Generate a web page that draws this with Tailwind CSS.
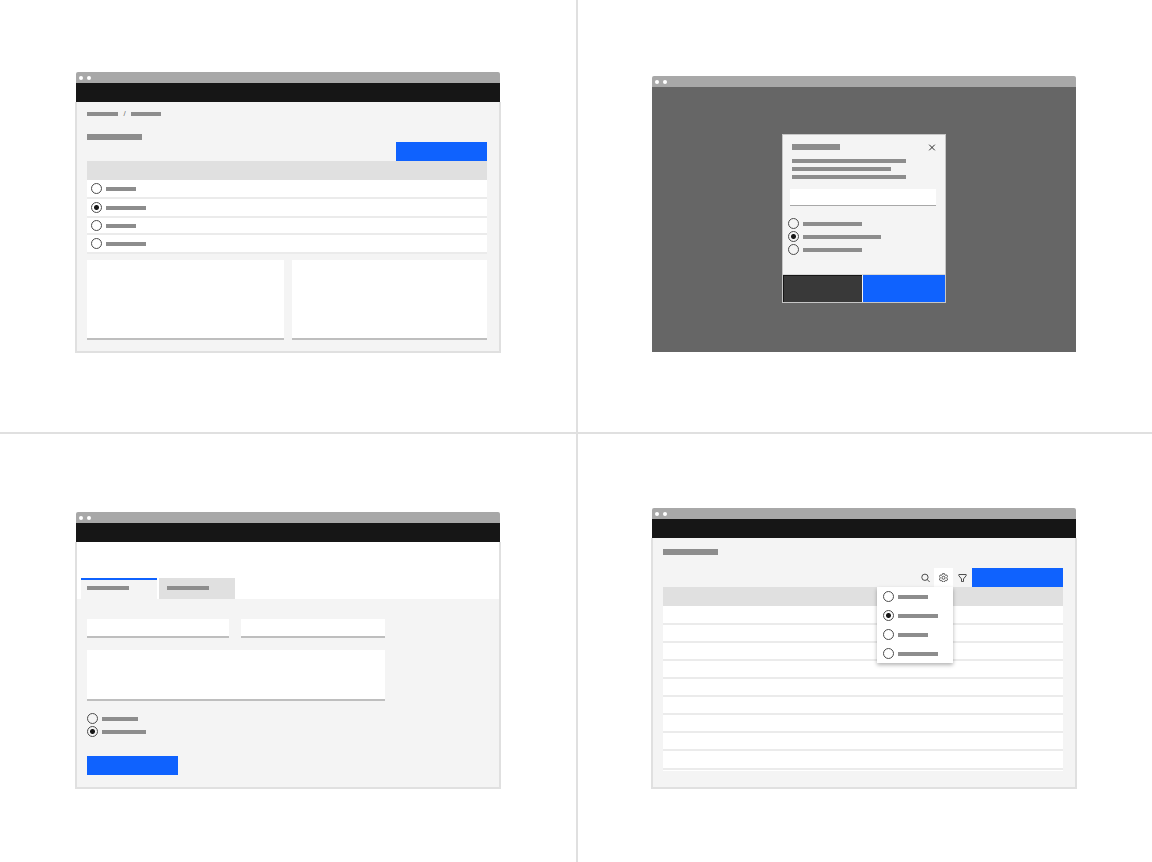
<!DOCTYPE html>
<html lang="en">
<head>
  <meta charset="UTF-8" />
  <meta name="viewport" content="width=device-width, initial-scale=1.0" />
  <title>Radio button placement</title>
  <script src="https://cdn.jsdelivr.net/npm/@tailwindcss/browser@4"></script>
</head>
<body class="bg-white font-['Liberation_Sans',sans-serif] text-[#161616]">

<main class="min-h-screen grid grid-cols-2">

  <!-- Radio buttons in a table -->
  <section class="px-[75px] pt-[72px] pb-[79px]">
    <div class="mx-px">
      <div class="flex items-center gap-1 h-[11px] px-[3px] bg-[#a8a8a8] rounded-t-xs">
        <span class="size-1 rounded-full bg-white"></span>
        <span class="size-1 rounded-full bg-white"></span>
      </div>
      <header class="h-[19px] bg-[#161616]"></header>
    </div>
    <div class="border-x-2 border-b-2 border-[#e0e0e0] bg-[#f4f4f4] pl-[10px] pr-3 pt-[10px] pb-[11px]">
      <nav class="flex items-center h-1" aria-label="Breadcrumb">
        <a href="#" aria-label="Section" class="w-[31px] h-1 bg-[#8d8d8d]"></a>
        <span class="w-[13px] text-center text-[8px] leading-none text-[#6f6f6f]">/</span>
        <a href="#" aria-label="Page" class="w-[30px] h-1 bg-[#8d8d8d]"></a>
      </nav>
      <h2 class="mt-[18px] w-[55px] h-[6px] bg-[#8d8d8d]" aria-label="Title"></h2>
      <div class="mt-[2px] flex justify-end">
        <button class="w-[91px] h-[19px] bg-[#0f62fe]" aria-label="Primary action"></button>
      </div>
      <table class="w-full border-separate border-spacing-0 leading-none">
        <thead>
          <tr><th class="h-[19px] p-0 bg-[#e0e0e0]" aria-label="Name"></th></tr>
        </thead>
        <tbody>
          <tr>
            <td class="h-[19px] p-0 bg-white border-b-2 border-[#ebebeb]">
              <label class="flex items-center gap-1 pl-1">
                <input type="radio" name="row" aria-label="Row 1" class="appearance-none size-[11px] rounded-full border border-[#4c4c4c] checked:bg-[radial-gradient(circle,#161616_2px,transparent_3px)]" />
                <span class="w-[30px] h-1 bg-[#8d8d8d]"></span>
              </label>
            </td>
          </tr>
          <tr>
            <td class="h-[19px] p-0 bg-white border-b-2 border-[#ebebeb]">
              <label class="flex items-center gap-1 pl-1">
                <input type="radio" name="row" aria-label="Row 2" checked class="appearance-none size-[11px] rounded-full border border-[#4c4c4c] checked:bg-[radial-gradient(circle,#161616_2px,transparent_3px)]" />
                <span class="w-[40px] h-1 bg-[#8d8d8d]"></span>
              </label>
            </td>
          </tr>
          <tr>
            <td class="h-[17px] p-0 bg-white border-b-2 border-[#ebebeb]">
              <label class="flex items-center gap-1 pl-1">
                <input type="radio" name="row" aria-label="Row 3" class="appearance-none size-[11px] rounded-full border border-[#4c4c4c] checked:bg-[radial-gradient(circle,#161616_2px,transparent_3px)]" />
                <span class="w-[30px] h-1 bg-[#8d8d8d]"></span>
              </label>
            </td>
          </tr>
          <tr>
            <td class="h-[19px] p-0 bg-white border-b-2 border-[#ebebeb]">
              <label class="flex items-center gap-1 pl-1">
                <input type="radio" name="row" aria-label="Row 4" class="appearance-none size-[11px] rounded-full border border-[#4c4c4c] checked:bg-[radial-gradient(circle,#161616_2px,transparent_3px)]" />
                <span class="w-[40px] h-1 bg-[#8d8d8d]"></span>
              </label>
            </td>
          </tr>
        </tbody>
      </table>
      <div class="mt-[6px] grid grid-cols-[197fr_195fr] gap-2">
        <textarea aria-label="Description" class="block w-full h-[80px] resize-none bg-white border-b-2 border-[#bebebe]"></textarea>
        <textarea aria-label="Notes" class="block w-full h-[80px] resize-none bg-white border-b-2 border-[#bebebe]"></textarea>
      </div>
    </div>
  </section>

  <!-- Radio buttons in a modal -->
  <section class="border-l-2 border-[#e0e0e0] pl-[74px] pr-[76px] pt-[76px] pb-[80px]">
    <div class="flex items-center gap-1 h-[11px] px-[3px] bg-[#a8a8a8] rounded-t-xs">
      <span class="size-1 rounded-full bg-white"></span>
      <span class="size-1 rounded-full bg-white"></span>
    </div>
    <div class="bg-[#666666] pt-[47px] pb-[49px]">
      <div role="dialog" aria-label="Modal" class="mx-auto w-[164px] border border-[#c6c6c6] bg-[#f4f4f4]">
        <div class="flex items-center justify-between h-[6px] mt-[9px] pl-[9px] pr-[9px]">
          <h2 class="w-[48px] h-[6px] bg-[#8d8d8d]" aria-label="Title"></h2>
          <button aria-label="Close" class="shrink-0">
            <svg class="block size-2" viewBox="0 0 8 8" fill="none" stroke="#161616" stroke-width="0.9"><path d="M1.2 1.7l5.6 5.6M6.8 1.7L1.2 7.3" /></svg>
          </button>
        </div>
        <div class="mt-[9px] px-[9px] flex flex-col gap-[4px]">
          <span class="w-[114px] h-1 bg-[#8d8d8d]"></span>
          <span class="w-[99px] h-1 bg-[#8d8d8d]"></span>
          <span class="w-[114px] h-1 bg-[#8d8d8d]"></span>
        </div>
        <div class="mt-[10px] pl-[7px] pr-[9px]">
          <input type="text" aria-label="Name" class="block w-full h-[17px] bg-white border-b border-[#a8a8a8]" />
        </div>
        <fieldset class="mt-3 pl-[5px] flex flex-col gap-[2px]" aria-label="Options">
          <label class="flex items-center gap-1">
            <input type="radio" name="modal" aria-label="Option 1" class="appearance-none size-[11px] rounded-full border border-[#4c4c4c] checked:bg-[radial-gradient(circle,#161616_2px,transparent_3px)]" />
            <span class="w-[59px] h-1 bg-[#8d8d8d]"></span>
          </label>
          <label class="flex items-center gap-1">
            <input type="radio" name="modal" aria-label="Option 2" checked class="appearance-none size-[11px] rounded-full border border-[#4c4c4c] checked:bg-[radial-gradient(circle,#161616_2px,transparent_3px)]" />
            <span class="w-[78px] h-1 bg-[#8d8d8d]"></span>
          </label>
          <label class="flex items-center gap-1">
            <input type="radio" name="modal" aria-label="Option 3" class="appearance-none size-[11px] rounded-full border border-[#4c4c4c] checked:bg-[radial-gradient(circle,#161616_2px,transparent_3px)]" />
            <span class="w-[59px] h-1 bg-[#8d8d8d]"></span>
          </label>
        </fieldset>
        <div class="mt-[19px] flex gap-px border-t border-[#d8d8d8]">
          <button aria-label="Cancel" class="w-[79px] h-[27px] bg-[#393939] border-l border-t border-[#161616]"></button>
          <button aria-label="Save" class="flex-1 h-[27px] bg-[#0f62fe]"></button>
        </div>
      </div>
    </div>
  </section>

  <!-- Radio buttons in a form -->
  <section class="border-t-2 border-[#e0e0e0] px-[75px] pt-[78px] pb-[73px]">
    <div class="mx-px">
      <div class="flex items-center gap-1 h-[11px] px-[3px] bg-[#a8a8a8] rounded-t-xs">
        <span class="size-1 rounded-full bg-white"></span>
        <span class="size-1 rounded-full bg-white"></span>
      </div>
      <header class="h-[19px] bg-[#161616]"></header>
    </div>
    <div class="border-x-2 border-b-2 border-[#e0e0e0]">
      <div role="tablist" class="flex gap-[2px] pt-[36px] pl-1 bg-white">
        <button role="tab" aria-selected="true" aria-label="Tab 1" class="flex items-start w-[76px] h-[21px] pl-[6px] pt-[6px] bg-[#f4f4f4] border-t-2 border-[#0f62fe]">
          <span class="w-[42px] h-1 bg-[#8d8d8d]"></span>
        </button>
        <button role="tab" aria-selected="false" aria-label="Tab 2" class="flex items-start w-[76px] h-[21px] pl-2 pt-2 bg-[#e0e0e0]">
          <span class="w-[42px] h-1 bg-[#8d8d8d]"></span>
        </button>
      </div>
      <form class="bg-[#f4f4f4] pl-[10px] pt-5 pb-3">
        <div class="w-[298px]">
          <div class="grid grid-cols-[142fr_144fr] gap-3">
            <input type="text" aria-label="First name" class="block w-full h-[19px] bg-white border-b-2 border-[#bebebe]" />
            <input type="text" aria-label="Last name" class="block w-full h-[19px] bg-white border-b-2 border-[#bebebe]" />
          </div>
          <textarea aria-label="Comments" class="mt-3 block w-full h-[51px] resize-none bg-white border-b-2 border-[#bebebe]"></textarea>
        </div>
        <fieldset class="mt-3 flex flex-col gap-[2px]" aria-label="Options">
          <label class="flex items-center gap-1">
            <input type="radio" name="form" aria-label="Option 1" class="appearance-none size-[11px] rounded-full border border-[#4c4c4c] checked:bg-[radial-gradient(circle,#161616_2px,transparent_3px)]" />
            <span class="w-[36px] h-1 bg-[#8d8d8d]"></span>
          </label>
          <label class="flex items-center gap-1">
            <input type="radio" name="form" aria-label="Option 2" checked class="appearance-none size-[11px] rounded-full border border-[#4c4c4c] checked:bg-[radial-gradient(circle,#161616_2px,transparent_3px)]" />
            <span class="w-[44px] h-1 bg-[#8d8d8d]"></span>
          </label>
        </fieldset>
        <button type="button" aria-label="Submit" class="mt-[19px] block w-[91px] h-[19px] bg-[#0f62fe]"></button>
      </form>
    </div>
  </section>

  <!-- Radio buttons in a settings menu -->
  <section class="border-l-2 border-t-2 border-[#e0e0e0] pl-[73px] pr-[75px] pt-[74px] pb-[73px]">
    <div class="mx-px">
      <div class="flex items-center gap-1 h-[11px] px-[3px] bg-[#a8a8a8] rounded-t-xs">
        <span class="size-1 rounded-full bg-white"></span>
        <span class="size-1 rounded-full bg-white"></span>
      </div>
      <header class="h-[19px] bg-[#161616]"></header>
    </div>
    <div class="border-x-2 border-b-2 border-[#e0e0e0] bg-[#f4f4f4] pl-[10px] pr-3 pt-[11px] pb-4">
      <h2 class="w-[55px] h-[6px] bg-[#8d8d8d]" aria-label="Title"></h2>
      <div class="mt-[13px] flex justify-end">
        <button aria-label="Search" class="flex items-center justify-center w-[17px] h-[19px]">
          <svg class="size-[9px]" viewBox="0 0 16 16" fill="none" stroke="#393939" stroke-width="1.6"><circle cx="7" cy="7.6" r="5.6" /><path d="M11 11.600l4.400 4.400" /></svg>
        </button>
        <div class="relative">
          <button aria-label="Settings" aria-expanded="true" class="flex items-center justify-center w-[19px] h-[19px] bg-white">
            <svg class="size-[9px]" viewBox="0 0 16 16" fill="none" stroke="#393939" stroke-width="1.5" stroke-linejoin="round">
              <path d="M6.200 1.200h3.600l.6 2.100 1.200.7 2.100-.5 1.700 3-1.500 1.500v1.200l1.500 1.500-1.700 3-2.100-.5-1.200.7-.6 2.100H6.200l-.6-2.100-1.200-.7-2.100.5-1.700-3 1.500-1.500V8l-1.500-1.500 1.700-3 2.100.5 1.200-.7z" /><circle cx="8" cy="8.500" r="2.700" />
            </svg>
          </button>
          <div class="absolute right-0 top-full w-[76px] bg-white shadow-[0_2px_4px_rgba(0,0,0,0.3)]">
            <label class="flex items-center gap-1 h-[19px] pl-[6px]">
              <input type="radio" name="menu" aria-label="Setting 1" class="appearance-none size-[11px] rounded-full border border-[#4c4c4c] checked:bg-[radial-gradient(circle,#161616_2px,transparent_3px)]" />
              <span class="w-[30px] h-1 bg-[#8d8d8d]"></span>
            </label>
            <label class="flex items-center gap-1 h-[19px] pl-[6px]">
              <input type="radio" name="menu" aria-label="Setting 2" checked class="appearance-none size-[11px] rounded-full border border-[#4c4c4c] checked:bg-[radial-gradient(circle,#161616_2px,transparent_3px)]" />
              <span class="w-[40px] h-1 bg-[#8d8d8d]"></span>
            </label>
            <label class="flex items-center gap-1 h-[19px] pl-[6px]">
              <input type="radio" name="menu" aria-label="Setting 3" class="appearance-none size-[11px] rounded-full border border-[#4c4c4c] checked:bg-[radial-gradient(circle,#161616_2px,transparent_3px)]" />
              <span class="w-[30px] h-1 bg-[#8d8d8d]"></span>
            </label>
            <label class="flex items-center gap-1 h-[19px] pl-[6px]">
              <input type="radio" name="menu" aria-label="Setting 4" class="appearance-none size-[11px] rounded-full border border-[#4c4c4c] checked:bg-[radial-gradient(circle,#161616_2px,transparent_3px)]" />
              <span class="w-[40px] h-1 bg-[#8d8d8d]"></span>
            </label>
          </div>
        </div>
        <button aria-label="Filter" class="flex items-center justify-center w-[19px] h-[19px]">
          <svg class="size-[9px]" viewBox="0 0 16 16" fill="none" stroke="#393939" stroke-width="1.6" stroke-linejoin="round"><path d="M1.500 2.700h13v2L9.800 10.500v4.800H6.200v-4.800L1.500 4.700z" /></svg>
        </button>
        <button class="w-[91px] h-[19px] bg-[#0f62fe]" aria-label="Primary action"></button>
      </div>
      <table class="w-full border-separate border-spacing-0 leading-none border-b border-white">
        <thead>
          <tr><th class="h-[19px] p-0 bg-[#e0e0e0]" aria-label="Name"></th></tr>
        </thead>
        <tbody>
          <tr><td class="h-[19px] p-0 bg-white border-b-2 border-[#ebebeb]"></td></tr>
          <tr><td class="h-[18px] p-0 bg-white border-b-2 border-[#ebebeb]"></td></tr>
          <tr><td class="h-[18px] p-0 bg-white border-b-2 border-[#ebebeb]"></td></tr>
          <tr><td class="h-[18px] p-0 bg-white border-b-2 border-[#ebebeb]"></td></tr>
          <tr><td class="h-[18px] p-0 bg-white border-b-2 border-[#ebebeb]"></td></tr>
          <tr><td class="h-[18px] p-0 bg-white border-b-2 border-[#ebebeb]"></td></tr>
          <tr><td class="h-[18px] p-0 bg-white border-b-2 border-[#ebebeb]"></td></tr>
          <tr><td class="h-[18px] p-0 bg-white border-b-2 border-[#ebebeb]"></td></tr>
          <tr><td class="h-[19px] p-0 bg-white border-b-2 border-[#ebebeb]"></td></tr>
        </tbody>
      </table>
    </div>
  </section>

</main>

</body>
</html>
